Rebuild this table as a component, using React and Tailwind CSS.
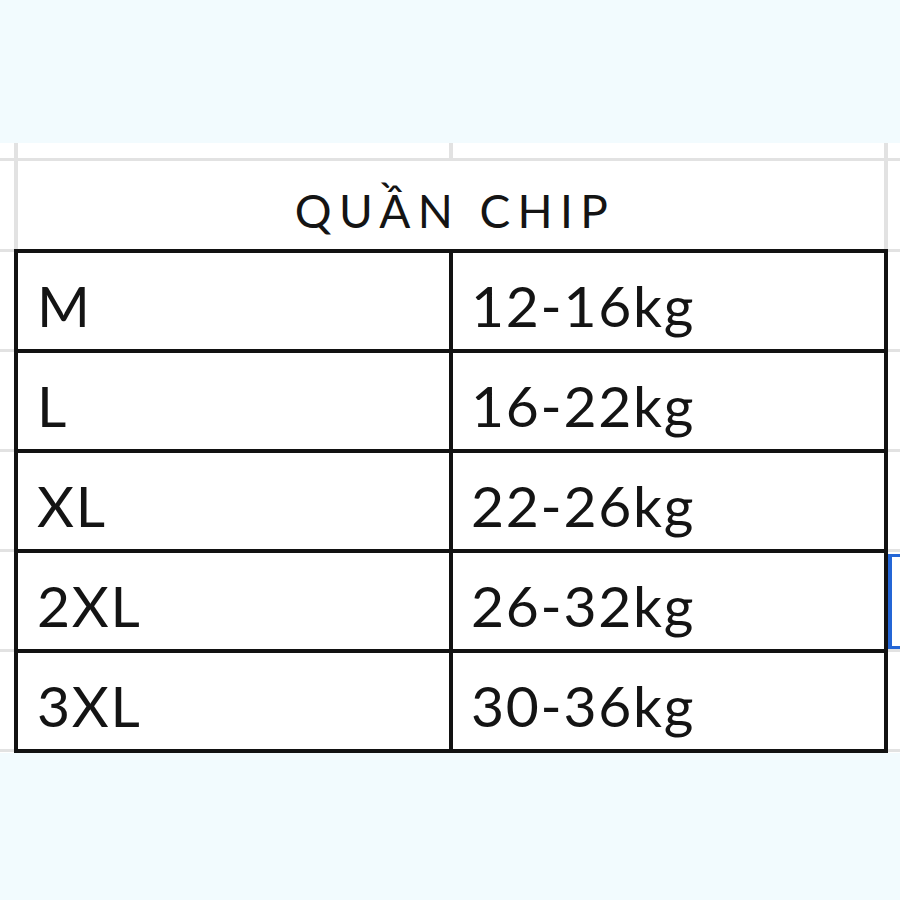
const sizes = [
    { size: 'M', weight: '12-16kg' },
    { size: 'L', weight: '16-22kg' },
    { size: 'XL', weight: '22-26kg' },
    { size: '2XL', weight: '26-32kg' },
    { size: '3XL', weight: '30-36kg' },
];

const font = { fontFamily: 'Lato, "Noto Sans", sans-serif' };

function Gutter({ selectedRow }) {
    return (
        <div className="flex flex-col flex-1">
            <div className="h-[15px]"></div>
            <div className="h-[3px] bg-[#e2e2e2]"></div>
            <div className="h-[88px]"></div>
            {sizes.map((item, index) => (
                <div key={item.size} className="flex flex-col">
                    <div className="h-[3px] bg-[#e2e2e2]"></div>
                    <div className="h-[97px] flex flex-col">
                        {selectedRow === index && (
                            <div className="mt-[2px] h-[96px] border-l-[4px] border-t-[3px] border-b-[3px] border-[#2466d6]"></div>
                        )}
                    </div>
                </div>
            ))}
            <div className="h-[3px] bg-[#e2e2e2]"></div>
        </div>
    );
}

export default function App() {
    return (
        <div className="min-h-screen bg-[#f2fbfe] pt-[143px]" style={font}>
            <div className="flex h-[610px] bg-white">
                {/* left gutter */}
                <div className="flex w-[14px]">
                    <Gutter />
                </div>

                {/* sheet */}
                <div className="flex w-[874px] flex-col">
                    <div className="flex h-[15px] border-l-4 border-[#e2e2e2]">
                        <div className="w-[435px] border-r-4 border-[#e2e2e2]"></div>
                        <div className="flex-1 border-r-4 border-[#e2e2e2]"></div>
                    </div>
                    <div className="h-[3px] bg-[#e2e2e2]"></div>
                    <div className="flex h-[88px] items-center justify-center border-x-4 border-[#e2e2e2] pl-[8px] pt-[10px] text-[46px] tracking-[0.16em] text-[#141414]">
                        QUẦN CHIP
                    </div>

                    {/* size table */}
                    <div className="border-4 border-[#121212]">
                        {sizes.map((item, index) => (
                            <div
                                key={item.size}
                                className={
                                    index === sizes.length - 1
                                        ? 'flex h-[96px]'
                                        : 'flex h-[100px] border-b-4 border-[#121212]'
                                }
                            >
                                <div className="flex w-[435px] items-center border-r-4 border-[#121212] pl-[19px] pt-[10px] text-[57px] tracking-[0.03em] text-[#141414]">
                                    {item.size}
                                </div>
                                <div className="flex flex-1 items-center pl-[18px] pt-[10px] text-[57px] tracking-[0.03em] text-[#141414]">
                                    {item.weight}
                                </div>
                            </div>
                        ))}
                    </div>
                </div>

                {/* right gutter */}
                <div className="flex flex-1">
                    <Gutter selectedRow={3} />
                </div>
            </div>
        </div>
    );
}
